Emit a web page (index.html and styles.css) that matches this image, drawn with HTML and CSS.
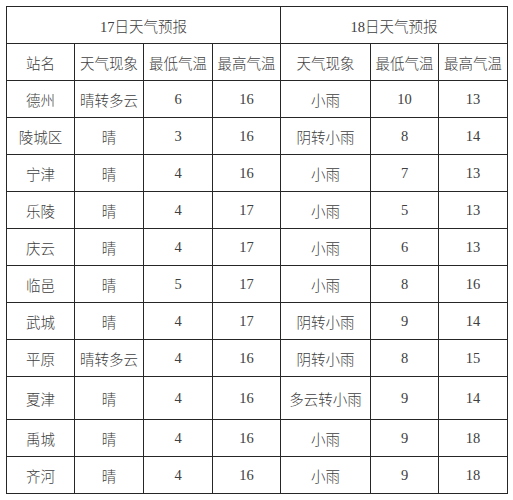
FILE: index.html
```html
<!DOCTYPE html>
<html lang="zh">
<head>
<meta charset="utf-8">
<title>天气预报</title>
<link rel="stylesheet" href="styles.css">
</head>
<body>
<table class="wx">
  <colgroup>
    <col class="c1"><col class="c2"><col class="c3"><col class="c4">
    <col class="c5"><col class="c6"><col class="c7">
  </colgroup>
  <tr class="head"><td colspan="4">17日天气预报</td><td colspan="3">18日天气预报</td></tr>
  <tr><td>站名</td><td>天气现象</td><td>最低气温</td><td>最高气温</td><td>天气现象</td><td>最低气温</td><td>最高气温</td></tr>
  <tr><td>德州</td><td>晴转多云</td><td>6</td><td>16</td><td>小雨</td><td>10</td><td>13</td></tr>
  <tr><td>陵城区</td><td>晴</td><td>3</td><td>16</td><td>阴转小雨</td><td>8</td><td>14</td></tr>
  <tr><td>宁津</td><td>晴</td><td>4</td><td>16</td><td>小雨</td><td>7</td><td>13</td></tr>
  <tr><td>乐陵</td><td>晴</td><td>4</td><td>17</td><td>小雨</td><td>5</td><td>13</td></tr>
  <tr><td>庆云</td><td>晴</td><td>4</td><td>17</td><td>小雨</td><td>6</td><td>13</td></tr>
  <tr><td>临邑</td><td>晴</td><td>5</td><td>17</td><td>小雨</td><td>8</td><td>16</td></tr>
  <tr><td>武城</td><td>晴</td><td>4</td><td>17</td><td>阴转小雨</td><td>9</td><td>14</td></tr>
  <tr><td>平原</td><td>晴转多云</td><td>4</td><td>16</td><td>阴转小雨</td><td>8</td><td>15</td></tr>
  <tr class="tall"><td>夏津</td><td>晴</td><td>4</td><td>16</td><td>多云转小雨</td><td>9</td><td>14</td></tr>
  <tr><td>禹城</td><td>晴</td><td>4</td><td>16</td><td>小雨</td><td>9</td><td>18</td></tr>
  <tr><td>齐河</td><td>晴</td><td>4</td><td>16</td><td>小雨</td><td>9</td><td>18</td></tr>
</table>
</body>
</html>
```
FILE: styles.css
```css
html, body {
  margin: 0;
  padding: 0;
  background: #ffffff;
}
body {
  padding: 6px 0 0 6px;
}
.wx {
  border-collapse: collapse;
  table-layout: fixed;
  width: 502px;
  font-family: "Liberation Serif", "Noto Sans CJK SC", serif;
  font-size: 14.5px;
  color: #404040;
}
.c1 { width: 68px; }
.c2 { width: 69px; }
.c3 { width: 69px; }
.c4 { width: 68px; }
.c5 { width: 90px; }
.c6 { width: 68px; }
.c7 { width: 69px; }
.wx td {
  border: 1px solid #262626;
  height: 36px;
  padding: 0;
  text-align: center;
  vertical-align: middle;
  white-space: nowrap;
  font-weight: 300;
}
.wx tr.tall td {
  height: 42px;
}
```
